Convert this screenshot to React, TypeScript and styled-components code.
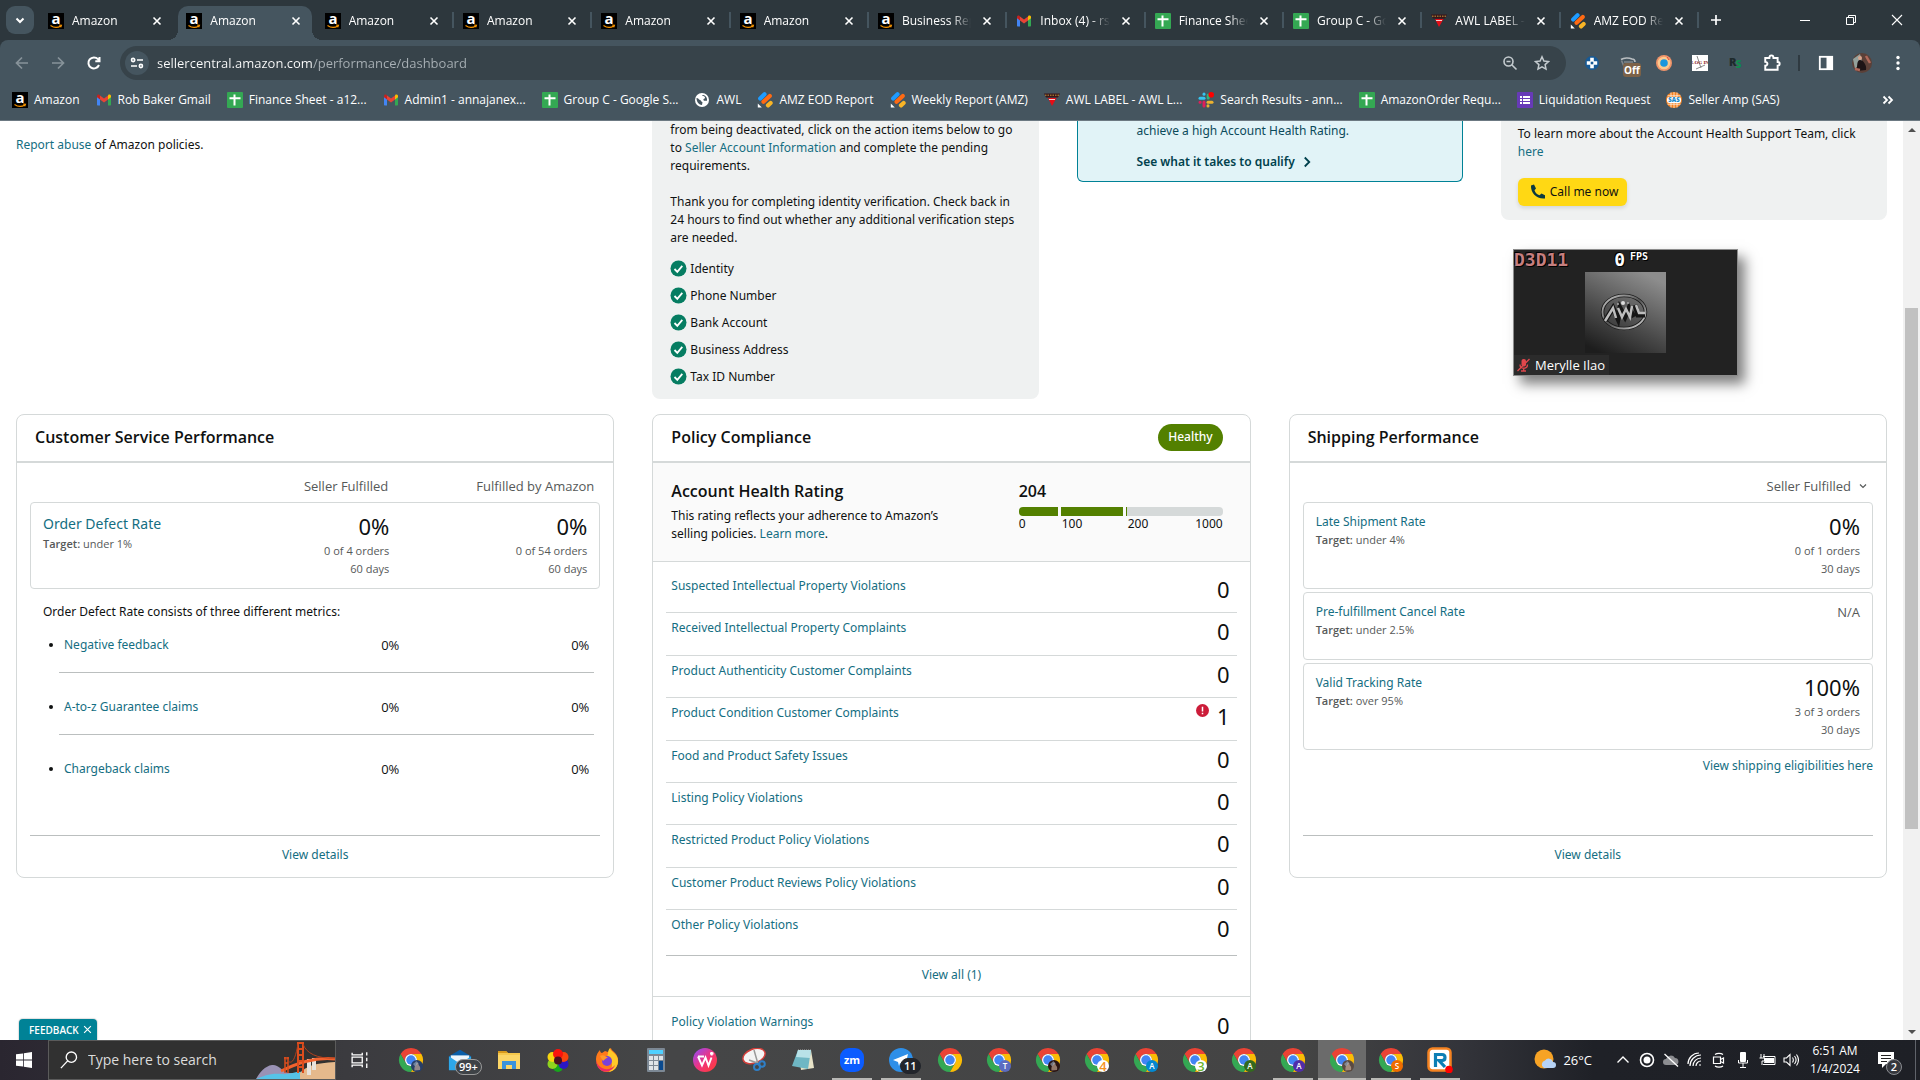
import React from "react";
import styled, { createGlobalStyle, css } from "styled-components";

const GlobalStyle = createGlobalStyle`
  *, *::before, *::after { box-sizing: border-box; }
  body { margin: 0; overflow: hidden; }
  button, input, select { font: inherit; color: inherit; margin: 0; padding: 0; border: 0; background: none; outline: none; }
  ul { list-style: none; margin: 0; padding: 0; }
  h2, h3, p { margin: 0; }
  a { text-decoration: none; color: inherit; }
  svg { display: block; flex: none; }
`;

const teal = "#146e82";
const ui = `"Open Sans", "Noto Sans", sans-serif`;
const pageFont = `"Noto Sans", "Open Sans", sans-serif`;

const Screen = styled.div`
  height: 100vh;
  display: flex;
  flex-direction: column;
  background: #2d373d;
  font: 12px/18px ${ui};
`;

/* ---------- Browser tab strip ---------- */

const TabStrip = styled.header`
  display: flex;
  align-items: center;
  height: 40px;
  padding-left: 6px;
  color: #fff;
`;
const TabSearch = styled.button`
  display: grid;
  place-items: center;
  width: 28px;
  height: 28px;
  margin-right: 5px;
  border-radius: 9px;
  background: #45555f;
`;
const Tabs = styled.nav`
  flex: 1;
  min-width: 0;
  align-self: stretch;
  display: grid;
  grid-auto-flow: column;
  grid-auto-columns: minmax(0, 1fr);
`;
const Tab = styled.div<{ $active?: boolean; $line?: boolean }>`
  position: relative;
  display: flex;
  align-items: center;
  gap: 8px;
  margin: 6px 4px 0 1px;
  padding: 0 8px 4px;
  border-radius: 10px 10px 0 0;
  ${(p) =>
    p.$active &&
    css`
      background: #45555f;
      &::before,
      &::after {
        content: "";
        position: absolute;
        bottom: 0;
        width: 10px;
        height: 10px;
      }
      &::before {
        left: -10px;
        background: radial-gradient(circle at 0 0, transparent 10px, #45555f 10px);
      }
      &::after {
        right: -10px;
        background: radial-gradient(circle at 100% 0, transparent 10px, #45555f 10px);
      }
    `}
  ${(p) =>
    p.$line &&
    css`
      &::after {
        content: "";
        position: absolute;
        right: -4px;
        top: 6px;
        width: 2px;
        height: 16px;
        background: #45555f;
      }
    `}
`;
const TabTitle = styled.button`
  flex: 1;
  min-width: 0;
  overflow: hidden;
  white-space: nowrap;
  text-align: left;
  mask-image: linear-gradient(90deg, #000 72%, transparent);
`;
const TabClose = styled.button`
  display: grid;
  place-items: center;
  width: 16px;
  height: 16px;
`;
const WindowButtons = styled.div`
  display: flex;
  align-items: center;
  align-self: stretch;
`;
const NewTab = styled.button`
  display: grid;
  place-items: center;
  width: 34px;
  height: 28px;
  margin-right: 49px;
`;
const WindowButton = styled.button`
  display: grid;
  place-items: center;
  width: 46px;
  align-self: stretch;
`;

/* ---------- Browser toolbar ---------- */

const Toolbar = styled.div`
  display: flex;
  align-items: center;
  height: 40px;
  padding: 6px 4px 0;
  border-radius: 8px 8px 0 0;
  background: #45555f;
  color: #fff;
`;
const ToolButton = styled.button<{ $dim?: boolean }>`
  position: relative;
  display: grid;
  place-items: center;
  width: 36px;
  height: 28px;
  color: ${(p) => (p.$dim ? "#87939a" : "#fff")};
`;
const AddressBar = styled.div`
  flex: 1;
  display: flex;
  align-items: center;
  height: 34px;
  margin: 0 8px;
  padding: 0 8px 0 5px;
  border-radius: 17px;
  background: #37434a;
`;
const SiteInfo = styled.button`
  display: grid;
  place-items: center;
  width: 24px;
  height: 24px;
  border-radius: 50%;
  background: #45555f;
  margin-right: 8px;
`;
const UrlInput = styled.input`
  flex: 1;
  min-width: 0;
  font-size: 13px;
  line-height: 20px;
  color: transparent;
  background: linear-gradient(90deg, #fff 0 155px, #a9b1b6 155px);
  background-clip: text;
`;
const BarButton = styled.button`
  display: grid;
  place-items: center;
  width: 32px;
  height: 28px;
  color: #c4cbcf;
`;
const OffBadge = styled.span`
  position: absolute;
  left: 13px;
  top: 14px;
  padding: 0 1px;
  border-radius: 3px;
  background: #7c6248;
  font: 700 10px/14px ${ui};
`;
const ToolDivider = styled.span`
  width: 2px;
  height: 16px;
  margin: 0 8px;
  background: #2f3a41;
`;

const BookmarkBar = styled.nav`
  display: flex;
  align-items: center;
  height: 41px;
  padding: 0 24px 0 12px;
  border-bottom: 1px solid #6c7982;
  background: #45555f;
  color: #fff;
`;
const Bookmark = styled.a`
  display: flex;
  align-items: center;
  gap: 6px;
  margin-right: 16px;
  white-space: nowrap;
`;
const MoreBookmarks = styled.button`
  margin-left: auto;
`;

/* ---------- Page ---------- */

const Viewport = styled.div`
  flex: 1;
  min-height: 0;
  display: flex;
  background: #fff;
`;
const Page = styled.main`
  position: relative;
  flex: 1;
  min-width: 0;
  overflow: hidden;
  padding: 0 16px;
  font-family: ${pageFont};
  color: #0f1111;
`;
const Link = styled.a`
  color: ${teal};
`;
const TopRow = styled.section`
  display: grid;
  grid-template-columns: 598fr 386fr 386fr 386fr;
  gap: 38px;
  align-items: start;
  margin-bottom: 15px;
`;
const ReportLine = styled.p`
  padding-top: 15px;
`;
const Notice = styled.article`
  padding: 0 16px 9px 18px;
  border-radius: 0 0 8px 8px;
  background: #eff1f1;
`;
const Paragraph = styled.p`
  & + & {
    margin-top: 18px;
  }
`;
const CheckList = styled.ul`
  margin-top: 8px;
`;
const CheckItem = styled.li`
  display: flex;
  align-items: center;
  gap: 3px;
  height: 27px;
`;
const Qualify = styled.article`
  padding: 1px 59px 10px;
  border: 1px solid #008296;
  border-top: 0;
  border-radius: 0 0 6px 6px;
  background: #e1f3f7;
  color: #0b4a5a;
`;
const QualifyLink = styled.a`
  display: flex;
  align-items: center;
  gap: 6px;
  margin-top: 13px;
  font-weight: 600;
  color: #00414d;
`;
const Support = styled(Notice)`
  padding: 4px 17px 14px;
`;
const CallButton = styled.button`
  display: flex;
  align-items: center;
  gap: 4px;
  height: 28px;
  margin-top: 17px;
  padding: 0 9px 0 12px;
  border-radius: 6px;
  background: #ffd814;
  box-shadow: 0 2px 4px rgba(15, 17, 17, 0.12);
`;

const CardRow = styled.section`
  display: grid;
  grid-template-columns: repeat(3, minmax(0, 1fr));
  gap: 38px;
  align-items: start;
`;
const Card = styled.article`
  display: flex;
  flex-direction: column;
  min-height: 464px;
  border: 1px solid #d5d9d9;
  border-radius: 8px;
`;
const CardHeader = styled.header`
  display: flex;
  align-items: center;
  justify-content: space-between;
  height: 48px;
  padding: 0 27px 2px 18px;
  border-bottom: 2px solid #d5d9d9;
`;
const Heading = styled.h2`
  font: 600 16px/20px ${ui};
`;
const HealthyBadge = styled.span`
  padding: 0 10px 2px;
  border-radius: 14px;
  background: #538000;
  color: #fff;
  font-weight: 500;
  line-height: 25px;
`;
const CardBody = styled.div`
  padding: 0 13px;
`;
const ColumnHeads = styled.div`
  display: flex;
  justify-content: flex-end;
  height: 39px;
  padding: 14px 6px 0 0;
  color: #565959;
  font: 13px/18px ${ui};
`;
const ColumnHead = styled.span`
  width: 206px;
  text-align: right;
`;
const FulfilSelect = styled.select`
  appearance: none;
  height: 18px;
  text-align: right;
`;
const SelectWrap = styled.label`
  display: flex;
  gap: 8px;
  height: 18px;
  align-items: center;
`;
const Metric = styled.div<{ $compact?: boolean }>`
  display: flex;
  height: ${(p) => (p.$compact ? 68 : 87)}px;
  padding: 10px 12px 0;
  border: 1px solid #d5d9d9;
  border-radius: 4px;
  & + & {
    margin-top: 3px;
  }
`;
const MetricInfo = styled.div`
  flex: 1;
`;
const MetricName = styled.a<{ $large?: boolean }>`
  display: block;
  font-size: ${(p) => (p.$large ? 14 : 12)}px;
  line-height: ${(p) => (p.$large ? 22 : 18)}px;
  color: ${teal};
`;
const Target = styled.p`
  font: 11px/18px ${ui};
  color: #565959;
  b {
    font-weight: 600;
  }
`;
const MetricValue = styled.div`
  width: 198px;
  text-align: right;
  color: #565959;
  font: 11px/18px ${ui};
`;
const Big = styled.span`
  display: block;
  margin-bottom: 3px;
  font: 22px/26px ${pageFont};
  color: #0f1111;
`;
const NotAvailable = styled.span`
  font-size: 13px;
`;
const Explain = styled.p`
  padding: 14px 13px 0;
`;
const SubMetrics = styled.ul`
  padding: 0 6px 0 29px;
`;
const SubMetric = styled.li`
  display: flex;
  padding: 15px 5px 18px;
  border-bottom: 1px solid #bbbfbf;
  & + & {
    padding-top: 25px;
  }
  &:last-child {
    border-bottom: 0;
  }
  &::before {
    content: "";
    width: 4px;
    height: 4px;
    margin: 7px 11px 0 -15px;
    border-radius: 50%;
    background: #0f1111;
  }
`;
const SubName = styled.a`
  flex: 1;
  color: ${teal};
`;
const SubValue = styled.span`
  width: 190px;
  text-align: right;
  font: 13px/18px ${ui};
`;
const CardFooter = styled.footer`
  margin: auto 13px 0;
  padding: 10px 0 13px;
  border-top: 1px solid #bbbfbf;
  text-align: center;
`;
const RightLine = styled.p`
  padding-top: 7px;
  text-align: right;
`;

const Health = styled.section`
  display: flex;
  justify-content: space-between;
  height: 99px;
  padding: 18px 27px 0 18px;
  border-bottom: 1px solid #d5d9d9;
  background: #fafafa;
`;
const HealthText = styled.div`
  width: 300px;
`;
const HealthCopy = styled.p`
  margin-top: 6px;
`;
const Score = styled.div`
  width: 204px;
`;
const Gauge = styled.div`
  display: flex;
  gap: 3px;
  height: 9px;
  margin-top: 6px;
  border-radius: 4px;
  overflow: hidden;
`;
const GaugePart = styled.span<{ $grow: number; $low?: boolean }>`
  flex: ${(p) => p.$grow};
  background: ${(p) => (p.$low ? "#d5d9d9" : "#538000")};
  border-left: ${(p) => (p.$low ? "1px solid #538000" : "0")};
`;
const Scale = styled.div`
  display: grid;
  grid-template-columns: 43fr 66fr 50fr 45fr;
  line-height: 16px;
  span:last-child {
    text-align: right;
  }
`;
const Violations = styled.ul`
  display: grid;
  grid-template-rows: repeat(8, 1fr) auto;
  height: 394px;
  padding: 9px 13px 0;
`;
const Violation = styled.li`
  display: flex;
  justify-content: space-between;
  align-items: flex-start;
  padding: 6px 7px 0 5px;
  border-bottom: 1px solid #d5d9d9;
  &:last-child {
    height: 46px;
    border-bottom-color: #bbbfbf;
  }
`;
const Count = styled.span`
  display: flex;
  gap: 8px;
  font-size: 22px;
  line-height: 24px;
`;
const ViewAll = styled.p`
  padding: 10px 0 12px;
  border-bottom: 1px solid #d5d9d9;
  text-align: center;
`;
const Warnings = styled.div`
  display: flex;
  justify-content: space-between;
  padding: 16px 20px 24px 18px;
`;

const Feedback = styled.button`
  position: absolute;
  left: 19px;
  bottom: 0;
  display: flex;
  align-items: center;
  gap: 4px;
  height: 21px;
  padding: 0 5px 0 10px;
  border-radius: 4px 4px 0 0;
  background: #008296;
  color: #fff;
  font: 600 10px/18px ${ui};
  box-shadow: 0 0 1px 1px rgba(0, 0, 0, 0.12);
`;

const ScrollTrack = styled.div`
  display: flex;
  flex-direction: column;
  align-items: center;
  width: 17px;
  background: #f1f1f1;
`;
const ScrollArrow = styled.button`
  display: grid;
  place-items: center;
  width: 17px;
  height: 17px;
`;
const ScrollRail = styled.div`
  flex: 1;
  display: grid;
  grid-template-rows: 170fr 521fr 194fr;
`;
const ScrollThumb = styled.span`
  grid-row: 2;
  width: 13px;
  background: #c1c1c1;
`;

/* ---------- Floating call window ---------- */

const CallWindow = styled.aside`
  position: absolute;
  right: 165px;
  top: 128px;
  display: grid;
  grid-template-rows: 22px 81px 22px;
  justify-items: center;
  width: 225px;
  height: 127px;
  border: 1px solid #8c8c8c;
  background: #222;
  color: #fff;
  box-shadow: 7px 8px 12px rgba(0, 0, 0, 0.5);
`;
const Overlay = styled.div`
  justify-self: stretch;
  display: flex;
  align-items: flex-start;
  font: 700 18px/20px "DejaVu Sans Mono", monospace;
  text-shadow: 1px 1px #000, -1px -1px #000;
`;
const Api = styled.span`
  color: #c67f7f;
`;
const Fps = styled.span`
  margin: 0 5px 0 46px;
`;
const FpsLabel = styled.small`
  font-size: 10px;
  line-height: 14px;
`;
const NameTag = styled.div`
  justify-self: start;
  align-self: end;
  display: flex;
  align-items: center;
  gap: 5px;
  height: 20px;
  padding: 0 4px 0 3px;
  background: #2b2b2b;
  font: 13px/18px ${ui};
`;

/* ---------- Taskbar ---------- */

const Taskbar = styled.footer`
  display: flex;
  align-items: stretch;
  height: 40px;
  background: linear-gradient(90deg, #2a2630 0, #3b3b3f 18%, #454647 35%, #444 68%, #33343a 76%, #1f2127 83%, #1e2026 100%);
  color: #fff;
`;
const StartButton = styled.button`
  display: grid;
  place-items: center;
  width: 48px;
`;
const SearchBox = styled.label`
  display: flex;
  align-items: center;
  gap: 10px;
  width: 288px;
  padding-left: 11px;
  border: 1px solid #5b5b5b;
  background: #313131;
`;
const SearchInput = styled.input`
  width: 136px;
  font-size: 14px;
  &::placeholder {
    color: #dcdcdc;
    opacity: 1;
  }
`;
const SearchArt = styled.svg`
  margin-left: auto;
`;
const Apps = styled.nav`
  flex: 1;
  display: flex;
  gap: 1px;
`;
const AppButton = styled.button<{ $open?: boolean; $active?: boolean }>`
  position: relative;
  display: grid;
  place-items: center;
  width: 48px;
  background: ${(p) => (p.$active ? "#6b6b6b" : "transparent")};
  &:first-child {
    margin-right: 2px;
  }
  ${(p) =>
    p.$open &&
    css`
      &::after {
        content: "";
        position: absolute;
        left: ${p.$active ? 0 : 4}px;
        right: ${p.$active ? 0 : 4}px;
        bottom: 0;
        height: 2px;
        background: #b9b8b5;
      }
    `}
`;
const CountBadge = styled.span<{ $wide?: boolean }>`
  position: absolute;
  left: ${(p) => (p.$wide ? 19 : 23)}px;
  top: ${(p) => (p.$wide ? 19 : 18)}px;
  min-width: 16px;
  padding: 0 3px;
  border: 1px solid ${(p) => (p.$wide ? "#9a9a9a" : "#22252b")};
  border-radius: 9px;
  background: ${(p) => (p.$wide ? "#3f4347" : "#22252b")};
  font: 600 11px/14px ${ui};
`;
const Tray = styled.div`
  display: flex;
  align-items: center;
  padding-right: 4px;
`;
const Weather = styled.button`
  display: flex;
  align-items: center;
  gap: 7px;
  margin-right: 19px;
  font-size: 13px;
`;
const TrayButton = styled.button`
  display: grid;
  place-items: center;
  width: 24px;
  height: 40px;
`;
const Clock = styled.time`
  width: 64px;
  text-align: center;
`;
const Notifications = styled.button`
  position: relative;
  display: grid;
  place-items: center;
  width: 49px;
  height: 40px;
  padding-right: 11px;
  border-right: 1px solid #60636a;
`;
const NoteCount = styled.span`
  position: absolute;
  left: 19px;
  top: 19px;
  width: 16px;
  height: 16px;
  border: 1px solid #8b8d92;
  border-radius: 50%;
  background: #35373d;
  font: 600 11px/14px ${ui};
`;

/* ---------- Icons ---------- */

const AmazonIcon = () => (
  <svg width="16" height="16" viewBox="0 0 16 16">
    <rect width="16" height="16" fill="#000" />
    <text x="8" y="10.6" textAnchor="middle" fontFamily="Open Sans, sans-serif" fontWeight="700" fontSize="15" fill="#fff">a</text>
    <path d="M2.500 12.400c3.200 2.300 7.400 2.300 10.400.5M11.200 12.200l2.200.1-.7 1.900" fill="none" stroke="#f79400" strokeWidth="1.200" />
  </svg>
);
const GmailIcon = () => (
  <svg width="16" height="16" viewBox="0 0 16 16">
    <path d="M1 4v8.500c0 .6.400 1 1 1h2V7z" fill="#4285f4" />
    <path d="M15 4v8.500c0 .6-.400 1-1 1h-2V7z" fill="#34a853" />
    <path d="M12 3.600V7.400l3-2.200V4c0-1.500-1.600-1.900-2.600-1.200z" fill="#fbbc04" />
    <path d="M4 3.400 8 6.400l4-3v4L8 10.500 4 7.400z" fill="#ea4335" />
    <path d="M1 4v1.200l3 2.200V3.600l-.5-.700C2.500 2 1 2.600 1 4z" fill="#c5221f" />
  </svg>
);
const SheetIcon = () => (
  <svg width="16" height="16" viewBox="0 0 16 16">
    <rect width="16" height="16" rx="1" fill="#34a853" />
    <path d="M2.500 6.200h11M7.500 2.500v11" stroke="#fff" strokeWidth="2" />
  </svg>
);
const FormIcon = () => (
  <svg width="16" height="16" viewBox="0 0 16 16">
    <rect width="16" height="16" rx="1" fill="#673ab7" />
    <path d="M3 5h2M6 5h7M3 8h2M6 8h7M3 11h2M6 11h7" stroke="#fff" strokeWidth="1.800" />
  </svg>
);
const GlobeIcon = () => (
  <svg width="16" height="16" viewBox="0 0 16 16">
    <circle cx="8" cy="8" r="7" fill="#fff" />
    <path d="M2.500 6c2 0 2 1.500 3.500 2s1 2 2.500 2.200L8 13c-3-.2-5.500-3-5.500-7zM8 3c1 1.800 3 .8 3 2.500S9 6.500 9.500 8s3 .5 3.500.8C13.500 5 11 3 8 3z" fill="#45555f" />
  </svg>
);
const ReportIcon = () => (
  <svg width="16" height="16" viewBox="0 0 16 16">
    <g strokeLinecap="round" strokeWidth="4.200">
      <path d="M3.200 6.500 7.500 2.300" stroke="#1e9bff" />
      <path d="M6.500 9.800 12.800 4" stroke="#ff6a13" />
      <path d="M11 13.400 13.600 11" stroke="#f9b526" />
    </g>
    <path d="M.8 11.500v4h4z" fill="#fff" />
  </svg>
);
const LabelIcon = () => (
  <svg width="16" height="16" viewBox="0 0 16 16">
    <path d="M0 1.500h16l-2 4H2z" fill="#3a1518" />
    <path d="M1 3.200h14" stroke="#c49a3a" strokeDasharray="1.500 1" />
    <path d="M4 6h8.500L8 14z" fill="#e40d16" />
    <path d="M5 7.500h6" stroke="#fff" strokeWidth=".8" />
  </svg>
);
const SlackIcon = () => (
  <svg width="16" height="16" viewBox="0 0 16 16">
    <g strokeWidth="3" strokeLinecap="round">
      <path d="M2 6.200h4" stroke="#36c5f0" />
      <path d="M6 2v.2" stroke="#36c5f0" />
      <path d="M10.200 3v3" stroke="#2eb67d" />
      <path d="M10 10.200h4" stroke="#ecb22e" />
      <path d="M10 14v-.2" stroke="#ecb22e" />
      <path d="M6 10v4M2 10.200h.2" stroke="#e01e5a" />
    </g>
    <circle cx="13.200" cy="2.800" r="2.800" fill="#f00" />
  </svg>
);
const SasIcon = () => (
  <svg width="16" height="16" viewBox="0 0 16 16">
    <circle cx="8" cy="8" r="8" fill="#f5821f" />
    <path d="M5 .500v15M8 0v16M11 .500v15M1.500 3.800h13M1.500 12.200h13" stroke="#fff" strokeWidth=".7" fill="none" />
    <rect x="1" y="5" width="14" height="6" rx="2" fill="#fff" />
    <text x="8" y="10.200" textAnchor="middle" fontFamily="Open Sans, sans-serif" fontWeight="800" fontSize="6" fill="#1d8ac9">SAS</text>
  </svg>
);

const icons = {
  amazon: AmazonIcon,
  gmail: GmailIcon,
  sheet: SheetIcon,
  form: FormIcon,
  globe: GlobeIcon,
  report: ReportIcon,
  label: LabelIcon,
  slack: SlackIcon,
  sas: SasIcon,
};
type IconName = keyof typeof icons;
const SiteIcon = ({ name }: { name: IconName }) => {
  const Glyph = icons[name];
  return <Glyph />;
};

const Stroke = ({ d, size = 16, width = 2 }: { d: string; size?: number; width?: number }) => (
  <svg width={size} height={size} viewBox="0 0 16 16" fill="none" stroke="currentColor" strokeWidth={width}>
    <path d={d} />
  </svg>
);

const CheckIcon = () => (
  <svg width="17" height="17" viewBox="0 0 17 17">
    <circle cx="8.500" cy="8.500" r="8" fill="#067d62" />
    <path d="M4.500 9l2.800 2.800 5-6" fill="none" stroke="#fff" strokeWidth="1.800" />
  </svg>
);

const ChromeIcon = ({ badge, letter, ring }: { badge?: string; letter?: string; ring?: string }) => (
  <svg width="26" height="26" viewBox="-2 0 52 52" overflow="visible">
    <path d="M24 14h20.800A24 24 0 0 0 3.200 14l10.400 18A12 12 0 0 1 24 14z" fill="#ea4335" />
    <path d="M34.400 32 24 50A24 24 0 0 1 3.200 14l10.400 18a12 12 0 0 0 20.800 0z" fill="#34a853" />
    <path d="M34.400 32 24 50A24 24 0 0 0 44.800 14H24a12 12 0 0 1 10.400 18z" fill="#fbbc05" />
    <circle cx="24" cy="26" r="12" fill="#fff" />
    <circle cx="24" cy="26" r="9.500" fill="#4285f4" />
    {badge && <circle cx="36" cy="38" r="12" fill={badge} />}
    {letter && (
      <text x="36" y={ring ? 47 : 44} textAnchor="middle" fontFamily="Open Sans, sans-serif" fontWeight="600" fontSize={ring ? 26 : 16} fill={ring || "#fff"}>
        {letter}
      </text>
    )}
    {badge && !letter && (
      <>
        <path d="M31 47c-1-8 2-9 3-13s5-4 5 0 5 4 3 12z" fill="#d9b9a4" opacity=".6" />
        <path d="M28 34l7-6 3 5-6 6z" fill="#9fb0c4" opacity=".6" />
      </>
    )}
  </svg>
);

/* ---------- Data ---------- */

const tabs: { icon: IconName; title: string; active?: boolean; line?: boolean }[] = [
  { icon: "amazon", title: "Amazon" },
  { icon: "amazon", title: "Amazon", active: true },
  { icon: "amazon", title: "Amazon", line: true },
  { icon: "amazon", title: "Amazon", line: true },
  { icon: "amazon", title: "Amazon", line: true },
  { icon: "amazon", title: "Amazon", line: true },
  { icon: "amazon", title: "Business Reports", line: true },
  { icon: "gmail", title: "Inbox (4) - rsbaker", line: true },
  { icon: "sheet", title: "Finance Sheet - a12", line: true },
  { icon: "sheet", title: "Group C - Google", line: true },
  { icon: "label", title: "AWL LABEL - AWL", line: true },
  { icon: "report", title: "AMZ EOD Report", line: true },
];

const bookmarks: { icon: IconName; title: string }[] = [
  { icon: "amazon", title: "Amazon" },
  { icon: "gmail", title: "Rob Baker Gmail" },
  { icon: "sheet", title: "Finance Sheet - a12..." },
  { icon: "gmail", title: "Admin1 - annajanex..." },
  { icon: "sheet", title: "Group C - Google S..." },
  { icon: "globe", title: "AWL" },
  { icon: "report", title: "AMZ EOD Report" },
  { icon: "report", title: "Weekly Report (AMZ)" },
  { icon: "label", title: "AWL LABEL - AWL L..." },
  { icon: "slack", title: "Search Results - ann..." },
  { icon: "sheet", title: "AmazonOrder Requ..." },
  { icon: "form", title: "Liquidation Request" },
  { icon: "sas", title: "Seller Amp (SAS)" },
];

const checks = ["Identity", "Phone Number", "Bank Account", "Business Address", "Tax ID Number"];
const subMetrics = ["Negative feedback", "A-to-z Guarantee claims", "Chargeback claims"];
const violations = [
  { name: "Suspected Intellectual Property Violations", count: 0 },
  { name: "Received Intellectual Property Complaints", count: 0 },
  { name: "Product Authenticity Customer Complaints", count: 0 },
  { name: "Product Condition Customer Complaints", count: 1 },
  { name: "Food and Product Safety Issues", count: 0 },
  { name: "Listing Policy Violations", count: 0 },
  { name: "Restricted Product Policy Violations", count: 0 },
  { name: "Customer Product Reviews Policy Violations", count: 0 },
  { name: "Other Policy Violations", count: 0 },
];
const shipping = [
  { name: "Late Shipment Rate", target: "under 4%", value: "0%", orders: "0 of 1 orders" },
  { name: "Pre-fulfillment Cancel Rate", target: "under 2.5%" },
  { name: "Valid Tracking Rate", target: "over 95%", value: "100%", orders: "3 of 3 orders" },
];

/* ---------- Sections ---------- */

const BrowserChrome = () => (
  <>
    <TabStrip>
      <TabSearch aria-label="Search tabs"><Stroke d="M4.500 6.500 8 10l3.500-3.500" /></TabSearch>
      <Tabs>
        {tabs.map((t, i) => (
          <Tab key={i} $active={t.active} $line={t.line}>
            <SiteIcon name={t.icon} />
            <TabTitle>{t.title}</TabTitle>
            <TabClose aria-label="Close tab"><Stroke d="M4.500 4.500l7 7M11.500 4.500l-7 7" width={1.6} /></TabClose>
          </Tab>
        ))}
      </Tabs>
      <WindowButtons>
        <NewTab aria-label="New tab"><Stroke d="M8 3v10M3 8h10" width={1.7} /></NewTab>
        <WindowButton aria-label="Minimize"><Stroke d="M3 8.500h10" width={1} /></WindowButton>
        <WindowButton aria-label="Restore"><Stroke d="M3.500 5.500h7v7h-7zM5.500 5.500v-2h7v7h-2" width={1} /></WindowButton>
        <WindowButton aria-label="Close"><Stroke d="M3 3l10 10M13 3 3 13" width={1.1} /></WindowButton>
      </WindowButtons>
    </TabStrip>
    <Toolbar>
      <ToolButton $dim aria-label="Back"><Stroke d="M14 8H2.500M8 2.500 2.500 8 8 13.500" width={1.7} /></ToolButton>
      <ToolButton $dim aria-label="Forward"><Stroke d="M2 8h11.500M8 2.500 13.500 8 8 13.500" width={1.7} /></ToolButton>
      <ToolButton aria-label="Reload"><Stroke d="M13 10a5.500 5.500 0 1 1-1-5.800l1.500 1.600M13.500 2v4.200H9.300" /></ToolButton>
      <AddressBar>
        <SiteInfo aria-label="Site information">
          <Stroke d="M2.500 5a1.600 1.600 0 1 0 3.200 0 1.600 1.600 0 1 0-3.200 0M8 5h6M10.300 11a1.600 1.600 0 1 0 3.200 0 1.600 1.600 0 1 0-3.200 0M2 11h6" width={1.6} />
        </SiteInfo>
        <UrlInput aria-label="Address" defaultValue="sellercentral.amazon.com/performance/dashboard" />
        <BarButton aria-label="Zoom"><Stroke d="M2 6.500a4.500 4.500 0 1 0 9 0 4.500 4.500 0 1 0-9 0M10 10l4.500 4.500M4.500 6.500h4" width={1.6} /></BarButton>
        <BarButton aria-label="Bookmark"><Stroke d="M8 1.800l1.900 4.200 4.600.5-3.400 3.100.9 4.500L8 11.800l-4 2.300.9-4.500L1.500 6.500 6.100 6z" width={1.5} /></BarButton>
      </AddressBar>
      <ToolButton aria-label="Extension one">
        <svg width="16" height="16" viewBox="0 0 16 16"><circle cx="8" cy="8" r="7" fill="#175a96" /><path d="M8 2.800v10.400M2.800 8h10.400" stroke="#fff" strokeWidth="3.600" /><path d="M6.700 6.700h2.600v2.600H6.700z" fill="#175a96" /></svg>
      </ToolButton>
      <ToolButton aria-label="Extension off">
        <svg width="16" height="16" viewBox="0 0 16 16" fill="none" stroke="#b9bec1" strokeWidth="1.600"><path d="M1 4.500c3-2 8-2 11-.500 2 0 3 1.500 3 3" /><path d="M1.500 5.500l2.500 6M4 7h9" stroke="#7f878c" /></svg>
        <OffBadge>Off</OffBadge>
      </ToolButton>
      <ToolButton aria-label="Extension three">
        <svg width="16" height="16" viewBox="0 0 16 16"><circle cx="8" cy="8" r="8" fill="#f0946a" /><circle cx="8" cy="8" r="6.300" fill="#fbc98f" /><circle cx="8" cy="8" r="3.800" fill="#1b96dd" /><path d="M11 2l2 3" stroke="#e0453a" /></svg>
      </ToolButton>
      <ToolButton aria-label="Extension four">
        <svg width="16" height="16" viewBox="0 0 16 16"><path fill="#fff" d="M0 0h16v16H0z" /><path d="M5 1l4 12M13 10l-9 4" stroke="#8a8a8a" fill="none" /><text x="8" y="8.500" textAnchor="middle" fontFamily="Liberation Serif, serif" fontWeight="700" fontSize="5" fill="#8b1a1a">LOG IN</text></svg>
      </ToolButton>
      <ToolButton aria-label="Extension five">
        <svg width="16" height="16" viewBox="0 0 16 16"><text x="1" y="11" fontFamily="Open Sans, sans-serif" fontWeight="800" fontSize="11" fill="#1d2a2c">R</text><text x="7.500" y="13" fontFamily="Open Sans, sans-serif" fontWeight="800" fontSize="10" fill="#128a4e">S</text></svg>
      </ToolButton>
      <ToolButton aria-label="Extensions"><Stroke size={18} d="M2 3.500h3.700c0-3 3.600-3 3.600 0H13v3.600c2.400 0 2.400 3.200 0 3.200V14H2v-3.700c2.600 0 2.600-3.300 0-3.300z" width={1.7} /></ToolButton>
      <ToolDivider />
      <ToolButton aria-label="Side panel">
        <svg width="16" height="16" viewBox="0 0 16 16"><rect x="1.800" y="1.800" width="12.400" height="12.400" fill="none" stroke="#fff" strokeWidth="1.800" /><path d="M8.500 2h5.700v12H8.500z" fill="#fff" /></svg>
      </ToolButton>
      <ToolButton aria-label="Profile">
        <svg width="20" height="20" viewBox="0 0 20 20"><circle cx="10" cy="10" r="10" fill="#5b4038" /><path d="M1 6l7-5 2 7-7 8z" fill="#93a19c" /><circle cx="8" cy="5" r="2" fill="#d8a48d" /><path d="M5 18c0-6 0-11 3-11s7 5 6 10z" fill="#1d1416" /><path d="M3 16l5 1M14 3l4 7" stroke="#b0685a" strokeWidth="2.500" /></svg>
      </ToolButton>
      <ToolButton aria-label="Menu">
        <svg width="16" height="16" viewBox="0 0 16 16" fill="#fff"><circle cx="8" cy="2.500" r="1.700" /><circle cx="8" cy="8" r="1.700" /><circle cx="8" cy="13.500" r="1.700" /></svg>
      </ToolButton>
    </Toolbar>
    <BookmarkBar>
      {bookmarks.map((b) => (
        <Bookmark key={b.title} href="#"><SiteIcon name={b.icon} />{b.title}</Bookmark>
      ))}
      <MoreBookmarks aria-label="More bookmarks"><Stroke d="M3.500 4.500 7 8l-3.500 3.500M8.500 4.500 12 8l-3.500 3.500" width={1.8} /></MoreBookmarks>
    </BookmarkBar>
  </>
);

const CustomerCard = () => (
  <Card>
    <CardHeader><Heading>Customer Service Performance</Heading></CardHeader>
    <CardBody>
      <ColumnHeads>
        <ColumnHead>Seller Fulfilled</ColumnHead>
        <ColumnHead>Fulfilled by Amazon</ColumnHead>
      </ColumnHeads>
      <Metric>
        <MetricInfo>
          <MetricName $large href="#">Order Defect Rate</MetricName>
          <Target><b>Target:</b> under 1%</Target>
        </MetricInfo>
        <MetricValue><Big>0%</Big>0 of 4 orders<br />60 days</MetricValue>
        <MetricValue><Big>0%</Big>0 of 54 orders<br />60 days</MetricValue>
      </Metric>
      <Explain>Order Defect Rate consists of three different metrics:</Explain>
      <SubMetrics>
        {subMetrics.map((m) => (
          <SubMetric key={m}><SubName href="#">{m}</SubName><SubValue>0%</SubValue><SubValue>0%</SubValue></SubMetric>
        ))}
      </SubMetrics>
    </CardBody>
    <CardFooter><Link href="#">View details</Link></CardFooter>
  </Card>
);

const PolicyCard = () => (
  <Card>
    <CardHeader><Heading>Policy Compliance</Heading><HealthyBadge>Healthy</HealthyBadge></CardHeader>
    <Health>
      <HealthText>
        <Heading as="h3">Account Health Rating</Heading>
        <HealthCopy>This rating reflects your adherence to Amazon’s selling policies. <Link href="#">Learn more</Link>.</HealthCopy>
      </HealthText>
      <Score>
        <Heading as="p">204</Heading>
        <Gauge><GaugePart $grow={40} /><GaugePart $grow={62} /><GaugePart $grow={96} $low /></Gauge>
        <Scale><span>0</span><span>100</span><span>200</span><span>1000</span></Scale>
      </Score>
    </Health>
    <Violations>
      {violations.map((v) => (
        <Violation key={v.name}>
          <Link href="#">{v.name}</Link>
          <Count>
            {v.count > 0 && (
              <svg width="13" height="13" viewBox="0 0 13 13"><circle cx="6.500" cy="6.500" r="6.500" fill="#cc1c39" /><path d="M6.500 2.800v4.700M6.500 8.700v1.500" stroke="#fff" strokeWidth="1.500" /></svg>
            )}
            {v.count}
          </Count>
        </Violation>
      ))}
    </Violations>
    <ViewAll><Link href="#">View all (1)</Link></ViewAll>
    <Warnings><Link href="#">Policy Violation Warnings</Link><Count>0</Count></Warnings>
  </Card>
);

const ShippingCard = () => (
  <Card>
    <CardHeader><Heading>Shipping Performance</Heading></CardHeader>
    <CardBody>
      <ColumnHeads>
        <SelectWrap>
          <FulfilSelect aria-label="Fulfilment"><option>Seller Fulfilled</option></FulfilSelect>
          <Stroke size={8} d="M2 5l6 6 6-6" width={2.4} />
        </SelectWrap>
      </ColumnHeads>
      {shipping.map((s) => (
        <Metric key={s.name} $compact={!s.value}>
          <MetricInfo>
            <MetricName href="#">{s.name}</MetricName>
            <Target><b>Target:</b> {s.target}</Target>
          </MetricInfo>
          <MetricValue>
            {s.value ? <><Big>{s.value}</Big>{s.orders}<br />30 days</> : <NotAvailable>N/A</NotAvailable>}
          </MetricValue>
        </Metric>
      ))}
      <RightLine><Link href="#">View shipping eligibilities here</Link></RightLine>
    </CardBody>
    <CardFooter><Link href="#">View details</Link></CardFooter>
  </Card>
);

const Call = () => (
  <CallWindow>
    <Overlay><Api>D3D11</Api><Fps>0</Fps><FpsLabel>FPS</FpsLabel></Overlay>
    <svg width="81" height="81" viewBox="0 0 81 81">
      <defs>
        <linearGradient id="plate" x1="0.2" y1="1" x2=".7" y2="0"><stop offset="0" stopColor="#1d1d1d" /><stop offset=".4" stopColor="#484848" /><stop offset="1" stopColor="#8d8d8d" /></linearGradient>
        <linearGradient id="metal" x1="0" y1="0" x2="1" y2="1"><stop offset="0" stopColor="#ccc" /><stop offset=".5" stopColor="#555" /><stop offset="1" stopColor="#ddd" /></linearGradient>
      </defs>
      <path d="M0 0h81v81H0z" fill="url(#plate)" />
      <ellipse cx="39" cy="40" rx="21.500" ry="16.500" fill="none" stroke="#1b1b1b" strokeWidth="3.500" />
      <ellipse cx="39" cy="40" rx="21.500" ry="16.500" fill="none" stroke="url(#metal)" strokeWidth="1.800" />
      <path d="M20 49l8-13 5 11 2-11 5 9 4-9 5 9M50 33l3 10h7" fill="none" stroke="#161616" strokeWidth="5" />
      <path d="M20 49l8-13 3 10M33 36l4 9 4-8 4 8 2-11M51 33l3 8h6" fill="none" stroke="#bdbdbd" strokeWidth="2.500" />
      <circle cx="38" cy="31" r="2" fill="#ddd" />
      <circle cx="43" cy="31" r="1" fill="#aaa" />
      <circle cx="33" cy="32" r="1" fill="#aaa" />
    </svg>
    <NameTag>
      <svg width="13" height="14" viewBox="0 0 13 14"><rect x="4.500" y="1" width="4.500" height="7.500" rx="2" fill="#e0474c" /><path d="M3 6.500c0 5 7.500 5 7.500 0M6.700 10.500V13M4 13h5M.5 13 12.500 1" fill="none" stroke="#e0474c" strokeWidth="1.300" /></svg>
      Merylle Ilao
    </NameTag>
  </CallWindow>
);

const WindowsTaskbar = () => (
  <Taskbar>
    <StartButton aria-label="Start">
      <svg width="22" height="16" viewBox="0 0 22 16" fill="#fff"><path d="M3 2.300l7-.9v6.200H3zM10.800 1.300 19 0v7.600h-8.200zM3 8.400h7v6.200l-7-.9zM10.800 8.400H19V16l-8.200-1.300z" /></svg>
    </StartButton>
    <SearchBox>
      <Stroke size={18} d="M5.500 5.500a4.600 4.600 0 1 0 9.200 0 4.600 4.600 0 1 0-9.200 0M6.600 9 .8 15.200" width={1.2} />
      <SearchInput aria-label="Search" placeholder="Type here to search" />
      <SearchArt width="79" height="38" viewBox="0 0 79 38">
        <path d="M0 38c4-7 9-13 16-14 6-1 10 6 16 8h14v6z" fill="#9a92b5" />
        <path d="M0 38c8-3 14-6 26-5 8 1 13-3 22-2l12 7z" fill="#56c3e8" />
        <path d="M44 32c6-7 16-10 35-11v17H44z" fill="#e5b98c" />
        <path d="M53 18v16M58 17v12" stroke="#e8e3dc" strokeWidth="4" />
        <path d="M25 30c17-8 33-14 54-12" fill="none" stroke="#f2622e" strokeWidth="3" />
        <path d="M42 1v31M47 1v31M41 2h7M42 8h5M42 14h5M42 20h5M42 26h5" stroke="#dd4d1d" strokeWidth="2" />
        <path d="M29 16v16M32 16v16M28 17h5M29 22h3" stroke="#dd4d1d" strokeWidth="1.500" />
        <path d="M30 17c5 9 9 3 12-14M47 3c3 9 14 15 32 14" fill="none" stroke="#b2401d" strokeWidth="1" />
      </SearchArt>
    </SearchBox>
    <Apps>
      <AppButton aria-label="Task view"><Stroke size={18} d="M1 1.500v2h9v-2M1 14.500v-2h9v2M1 5.500h9v5H1zM14 1v3M14 6v3M14 11v4" width={1.2} /></AppButton>
      <AppButton aria-label="Chrome profile"><ChromeIcon badge="#283e66" /></AppButton>
      <AppButton aria-label="Mail">
        <svg width="24" height="26" viewBox="0 0 26 26"><path d="M1 9 13 2l12 7v14H1z" fill="#0a5ea8" /><path d="M3 8h20v10H3z" fill="#eef5fb" /><path d="M1 9l12 8 12-8v15H1z" fill="#2da7ea" /></svg>
        <CountBadge $wide>99+</CountBadge>
      </AppButton>
      <AppButton aria-label="File Explorer">
        <svg width="24" height="22" viewBox="0 0 24 22"><path d="M1 2h8l2 2h12v16H1z" fill="#f6c84c" /><path d="M1 2h8l2 2H1z" fill="#d99a1c" /><path d="M1 6h22v14H1z" fill="#fcd667" /><path d="M5 20v-8h14v8h-4v-4H9v4z" fill="#3b93dc" /></svg>
      </AppButton>
      <AppButton aria-label="Colors">
        <svg width="26" height="26" viewBox="0 0 26 26"><circle cx="13" cy="20" r="5" fill="#17a51c" /><circle cx="7.500" cy="17" r="5" fill="#8fd41e" /><circle cx="7.500" cy="10" r="5" fill="#f7d50e" /><circle cx="18.500" cy="17" r="5" fill="#2b17c4" /><circle cx="18.500" cy="10" r="5" fill="#f9430d" /><circle cx="13" cy="7" r="5" fill="#f9130d" /><circle cx="13" cy="13.500" r="4" fill="#4a1020" /></svg>
      </AppButton>
      <AppButton aria-label="Firefox">
        <svg width="26" height="26" viewBox="0 0 26 26"><path d="M2 12c0-4 2-7 4-9 0 2 1 3 2 3l3-2 3 1c1-2 1-3 3-4 0 3 6 4 7 11 1 7-4 13-11 13S2 19 2 12z" fill="#ff7a1a" /><path d="M16 1c0 4 8 5 8 13 0 6-4 10-9 11 6-7 2-12-2-14 1-4 1-8 3-10z" fill="#ffc928" /><path d="M2 13c2 10 14 12 19 5-3 9-18 10-19-5z" fill="#ed2a63" /><circle cx="13" cy="14" r="5" fill="#7a41d8" /><path d="M6 9c3-2 6 0 8 2-3 0-3 2-5 3z" fill="#ff9a2a" /></svg>
      </AppButton>
      <AppButton aria-label="Calculator">
        <svg width="18" height="24" viewBox="0 0 18 24"><rect width="18" height="24" rx="1" fill="#7c8894" /><rect x="2" y="2" width="14" height="4" fill="#4fd0ff" /><path d="M2 8h4v4H2zM7 8h4v4H7zM12 8h4v4h-4zM2 13h4v4H2zM7 13h4v4H7zM2 18h4v4H2zM7 18h4v4H7z" fill="#dfe4e8" /><path d="M12 13h4v9h-4z" fill="#0a4a8e" /></svg>
      </AppButton>
      <AppButton aria-label="WPS">
        <svg width="24" height="24" viewBox="0 0 24 24"><defs><linearGradient id="wps" x1="0" y1="0" x2="1" y2="1"><stop offset="0" stopColor="#8a4dff" /><stop offset=".5" stopColor="#f0347f" /><stop offset="1" stopColor="#ff3d2e" /></linearGradient></defs><circle cx="12" cy="12" r="12" fill="url(#wps)" /><path d="M5 8.500l4 9 3.500-8 3 8 3-8M5 8.500h6M17 5.500h3.500M18.700 4v3.500" fill="none" stroke="#fff" strokeWidth="1.900" /></svg>
      </AppButton>
      <AppButton aria-label="Snipping Tool">
        <svg width="26" height="24" viewBox="0 0 26 24"><ellipse cx="13" cy="8" rx="11.500" ry="7" transform="rotate(-20 13 8)" fill="#f4f4f4" stroke="#d5403c" strokeWidth="1.500" /><path d="M13 2l4 14M8 12l11 4" stroke="#999" strokeWidth="1.500" /><circle cx="16" cy="19" r="3" fill="none" stroke="#2f7fc7" strokeWidth="2" /><circle cx="21" cy="16" r="2.800" fill="none" stroke="#2f7fc7" strokeWidth="2" /></svg>
      </AppButton>
      <AppButton aria-label="Notepad">
        <svg width="24" height="24" viewBox="0 0 24 24"><path d="M7 2h13l3 18-13 2z" fill="#e8e3c8" /><path d="M7 2h13l-3 19L1 18z" fill="#6fb7c4" /><path d="M7 2h13l-1 8-14-1z" fill="#b8e2e8" /><path d="M7 1.500h13" stroke="#777" strokeDasharray="1 1" /></svg>
      </AppButton>
      <AppButton $open aria-label="Zoom">
        <svg width="24" height="24" viewBox="0 0 24 24"><rect width="24" height="24" rx="9" fill="#0b5cff" /><text x="12" y="15.500" textAnchor="middle" fontFamily="Open Sans, sans-serif" fontWeight="700" fontSize="11" fill="#fff">zm</text></svg>
      </AppButton>
      <AppButton $open aria-label="Telegram">
        <svg width="24" height="24" viewBox="0 0 24 24"><circle cx="12" cy="12" r="12" fill="#2e8fe8" /><path d="M4 12l15-6-3 13-5-4-1 3-1-4z" fill="#fff" /></svg>
        <CountBadge>11</CountBadge>
      </AppButton>
      <AppButton aria-label="Chrome"><ChromeIcon /></AppButton>
      <AppButton aria-label="Chrome T"><ChromeIcon badge="#5c6bc0" letter="T" /></AppButton>
      <AppButton aria-label="Chrome photo"><ChromeIcon badge="#2a1412" /></AppButton>
      <AppButton aria-label="Chrome 4"><ChromeIcon badge="#fff" letter="4" ring="#f5921e" /></AppButton>
      <AppButton aria-label="Chrome A"><ChromeIcon badge="#0288d1" letter="A" /></AppButton>
      <AppButton aria-label="Chrome 3"><ChromeIcon badge="#fff" letter="3" ring="#6ab42d" /></AppButton>
      <AppButton aria-label="Chrome green"><ChromeIcon badge="#33691e" letter="A" /></AppButton>
      <AppButton $open aria-label="Chrome purple"><ChromeIcon badge="#512da8" letter="A" /></AppButton>
      <AppButton $open $active aria-label="Chrome current"><ChromeIcon badge="#5a4a42" /></AppButton>
      <AppButton $open aria-label="Chrome S"><ChromeIcon badge="#ef6c00" letter="S" /></AppButton>
      <AppButton $open aria-label="Remote desktop">
        <svg width="26" height="26" viewBox="0 0 26 26"><rect x="1.500" y="1.500" width="22" height="22" rx="4" fill="#fff" stroke="#f58220" strokeWidth="2.500" /><path d="M8.500 20V7.500h6.500q3 0 3 3t-3 3h-3l6 6.500" fill="none" stroke="#0d7fb5" strokeWidth="3.200" /><circle cx="22" cy="22.500" r="3.800" fill="#f00" /></svg>
      </AppButton>
    </Apps>
    <Tray>
      <Weather>
        <svg width="22" height="22" viewBox="0 0 22 22"><circle cx="10" cy="10" r="9.500" fill="#f7a325" /><path d="M10 19a4 4 0 0 1 1-7.500 4.500 4.500 0 0 1 8 1.500 3 3 0 0 1 0 6z" fill="#b7d3f6" /></svg>
        26°C
      </Weather>
      <TrayButton aria-label="Hidden icons"><Stroke d="M2.500 10.500 8 5l5.500 5.500" width={1.4} /></TrayButton>
      <TrayButton aria-label="Record"><svg width="16" height="16" viewBox="0 0 16 16"><circle cx="8" cy="8" r="6.500" fill="none" stroke="#fff" strokeWidth="1.600" /><circle cx="8" cy="8" r="3.500" fill="#fff" /></svg></TrayButton>
      <TrayButton aria-label="OneDrive"><svg width="16" height="16" viewBox="0 0 16 16"><path d="M3 13a3 3 0 0 1 0-6 5 5 0 0 1 9-1 3.600 3.600 0 0 1 1 7z" fill="#8c8d91" /><path d="M1.500 2 15 14.500" stroke="#fff" strokeWidth="1.300" /></svg></TrayButton>
      <TrayButton aria-label="Wi-Fi"><Stroke d="M3 14A11 11 0 0 1 14 3M6 14a8 8 0 0 1 8-8M9 14a5 5 0 0 1 5-5M1 12A11 11 0 0 1 12 1M12 13h2" width={1.2} /></TrayButton>
      <TrayButton aria-label="Meet now"><Stroke d="M2.500 5h7v6.500h-7zM9.500 7.500l3-1.500v5l-3-1.500M4 2.500c2-1.500 6-1.500 8 0M4 14c2 1.500 6 1.500 8 0" width={1.2} /></TrayButton>
      <TrayButton aria-label="Microphone"><svg width="16" height="18" viewBox="0 0 16 18"><rect x="5" y="1" width="6" height="10" rx="1" fill="#fff" /><path d="M3.500 9v3h9V9M8 12v4M5 16.500h6" fill="none" stroke="#fff" /></svg></TrayButton>
      <TrayButton aria-label="Battery"><svg width="18" height="16" viewBox="0 0 18 16"><path d="M7 6h9v5H6z" fill="#fff" /><path d="M5 4.500h12v8H5M3 2v4M6 2v4M1.500 6h5v3H4v4" fill="none" stroke="#fff" /></svg></TrayButton>
      <TrayButton aria-label="Volume"><Stroke d="M1 6h2.500L7 2.500v11L3.500 10H1zM9.500 5.500c1 1.500 1 3.500 0 5M11.500 4c2 2.500 2 5.500 0 8M13.500 2.500c2.500 3.500 2.500 7.500 0 11" width={1.1} /></TrayButton>
      <Clock>6:51 AM<br />1/4/2024</Clock>
      <Notifications aria-label="Notifications">
        <svg width="18" height="18" viewBox="0 0 18 18"><path d="M1 1h16v12h-8l-4 4v-4H1z" fill="#fff" /><path d="M4 4.500h10M4 7.500h10M4 10.500h6" stroke="#222" /></svg>
        <NoteCount>2</NoteCount>
      </Notifications>
    </Tray>
  </Taskbar>
);

export default function App() {
  return (
    <Screen>
      <GlobalStyle />
      <BrowserChrome />
      <Viewport>
        <Page>
          <TopRow>
            <ReportLine><Link href="#">Report abuse</Link> of Amazon policies.</ReportLine>
            <Notice>
              <Paragraph>from being deactivated, click on the action items below to go to <Link href="#">Seller Account Information</Link> and complete the pending requirements.</Paragraph>
              <Paragraph>Thank you for completing identity verification. Check back in 24 hours to find out whether any additional verification steps are needed.</Paragraph>
              <CheckList>
                {checks.map((c) => <CheckItem key={c}><CheckIcon />{c}</CheckItem>)}
              </CheckList>
            </Notice>
            <Qualify>
              <p>achieve a high Account Health Rating.</p>
              <QualifyLink href="#">See what it takes to qualify <Stroke size={12} d="M5 2l6 6-6 6" width={2.4} /></QualifyLink>
            </Qualify>
            <Support>
              <p>To learn more about the Account Health Support Team, click <Link href="#">here</Link></p>
              <CallButton>
                <svg width="16" height="16" viewBox="0 0 16 16"><path d="M1 1.500 4 .5l2 4-1.500 1.700c.8 2.500 2.600 4.300 5 5L11.500 9.500l3.500 1.700v3.300C7 15.500.5 9 1 1.500z" fill="#0b3a40" /></svg>
                Call me now
              </CallButton>
            </Support>
          </TopRow>
          <CardRow>
            <CustomerCard />
            <PolicyCard />
            <ShippingCard />
          </CardRow>
          <Feedback>FEEDBACK <Stroke size={9} d="M2 2l12 12M14 2 2 14" width={2} /></Feedback>
          <Call />
        </Page>
        <ScrollTrack>
          <ScrollArrow aria-label="Scroll up"><svg width="8" height="4" viewBox="0 0 8 4"><path d="M0 4l4-4 4 4z" fill="#505050" /></svg></ScrollArrow>
          <ScrollRail><ScrollThumb /></ScrollRail>
          <ScrollArrow aria-label="Scroll down"><svg width="8" height="4" viewBox="0 0 8 4"><path d="M0 0l4 4 4-4z" fill="#505050" /></svg></ScrollArrow>
        </ScrollTrack>
      </Viewport>
      <WindowsTaskbar />
    </Screen>
  );
}
